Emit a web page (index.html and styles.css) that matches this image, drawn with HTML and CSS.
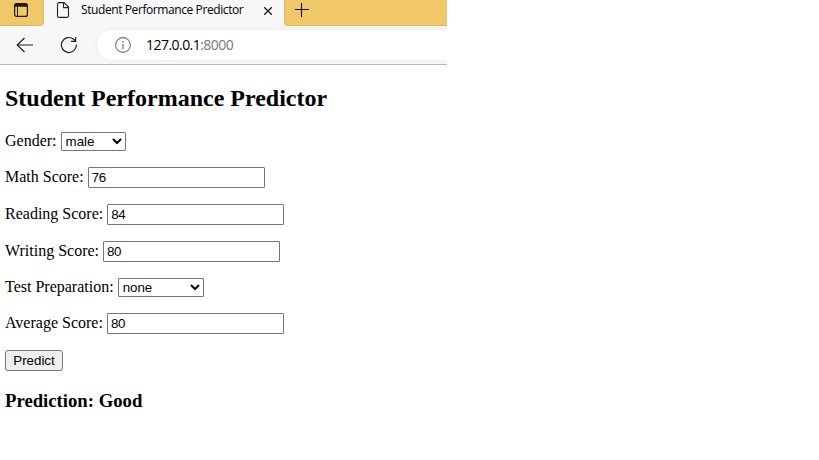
FILE: index.html
```html
<!DOCTYPE html>
<html lang="en">
<head>
<meta charset="utf-8">
<title>Student Performance Predictor</title>
<link rel="stylesheet" href="styles.css">
</head>
<body>
<header class="browser">
  <div class="tabs">
    <div class="tab-actions">
      <svg width="16" height="16" viewBox="0 0 16 16" fill="none" stroke="#201b10"><rect x="1.6" y="1.6" width="12.8" height="12.8" rx="2" stroke-width="1.2"/><path d="M2 3.3h12" stroke-width="3"/><path d="M4.5 5v9" stroke-width="1"/></svg>
    </div>
    <div class="tab">
      <svg class="page-icon" width="14" height="18" viewBox="0 0 14 18" fill="none" stroke="#222" stroke-width="1.1"><path d="M3 1.6h5l4.5 4.5v8.8a1.5 1.5 0 0 1-1.5 1.5H3a1.5 1.5 0 0 1-1.5-1.5V3.1A1.5 1.5 0 0 1 3 1.6zM7.5 1.6v5h5"/></svg>
      <span class="tab-title">Student Performance Predictor</span>
      <svg class="close" width="10" height="10" viewBox="0 0 10 10" stroke="#222" stroke-width="1.4"><path d="M1.2 1.2l7.6 7.6M8.8 1.2L1.2 8.8"/></svg>
    </div>
    <div class="new-tab">
      <svg width="16" height="16" viewBox="0 0 16 16" stroke="#111" stroke-width="1.1"><path d="M1 7.5h14M7.5 1v14"/></svg>
    </div>
  </div>
  <div class="toolbar">
    <svg class="back" width="18" height="16" viewBox="0 0 18 16" fill="none" stroke="#222" stroke-width="1.2"><path d="M17 8H1.2M8.5 1L1.2 8l7.3 7"/></svg>
    <svg class="reload" width="18" height="18" viewBox="0 0 18 18" fill="none" stroke="#222" stroke-width="1.2"><path d="M16.4 8.5A7.5 7.5 0 1 1 14 3.5L15.6 5.2M15.6 1v4.4h-4.6"/></svg>
    <div class="address">
      <svg width="18" height="18" viewBox="0 0 18 18" fill="none" stroke="#777" stroke-width="1.1"><circle cx="9" cy="9" r="7.4"/><path d="M9 8v5M9 5v1.5" stroke-width="1.3"/></svg>
      <span class="url">127.0.0.1<span class="port">:8000</span></span>
    </div>
  </div>
</header>
<main>
  <h2>Student Performance Predictor</h2>
  <form>
    <div class="row"><label for="gender">Gender:</label><select id="gender" class="gender"><option>male</option></select></div>
    <div class="row"><label for="math">Math Score:</label><input id="math" value="76"></div>
    <div class="row"><label for="reading">Reading Score:</label><input id="reading" value="84"></div>
    <div class="row"><label for="writing">Writing Score:</label><input id="writing" value="80"></div>
    <div class="row"><label for="prep">Test Preparation:</label><select id="prep" class="prep"><option>none</option></select></div>
    <div class="row"><label for="average">Average Score:</label><input id="average" value="80"></div>
    <button type="button">Predict</button>
  </form>
  <h3>Prediction: Good</h3>
</main>
</body>
</html>
```
FILE: styles.css
```css
* { box-sizing: border-box; }
body { margin: 0; background: #fff; color: #000; font: 16px "Liberation Serif", serif; overflow: hidden; }
svg { display: block; flex: none; }
.browser { width: 447px; height: 65px; background: #f7f7f7; border-bottom: 1px solid #b9b9b9; font-family: "Open Sans", sans-serif; }
.tabs { display: flex; height: 26px; }
.tab-actions, .new-tab { background: #f0c869; border-bottom: 1px solid #dfb75b; }
.tab-actions { width: 44px; padding: 2px 0 0 13px; border-right: 1px solid #e3bd65; border-radius: 0 0 4px 0; }
.tab { display: flex; width: 240px; padding-left: 12px; }
.page-icon { margin-top: 1px; }
.tab-title { width: 163px; margin-left: 11px; font-size: 12px; line-height: 20px; letter-spacing: -0.41px; white-space: nowrap; }
.close { margin: 6px 0 0 19px; }
.new-tab { flex: 1; padding: 2px 0 0 9px; border-left: 1px solid #e3bd65; border-radius: 0 0 0 4px; }
.toolbar { display: flex; height: 38px; padding: 4px 0 4px 16px; }
.back { margin-top: 7px; }
.reload { margin: 6px 0 0 26px; }
.address { display: flex; flex: 1; height: 30px; margin-left: 19px; padding: 6px 0 0 17px; background: #fff; border-radius: 15px 0 0 15px; box-shadow: 0 0 4px #e6e6e6; clip-path: inset(-4px 0 -4px -4px); }
.url { margin-left: 14px; font-size: 14px; line-height: 18px; letter-spacing: -0.54px; }
.port { color: #777; }
main { padding: 20px 5px 0; }
h2 { margin: 0; font-size: 24px; line-height: 27px; }
form { display: flex; flex-direction: column; align-items: flex-start; gap: 16px; margin-top: 20px; }
.row { display: flex; align-items: center; }
label { margin: 0 4px 2px 0; line-height: 16px; white-space: nowrap; }
input, select, button { margin: 0; font: 13.333px "Liberation Sans", sans-serif; color: #000; border: 1px solid #767676; }
input { width: 177px; height: 21px; padding: 1px 3px; border-radius: 1px; background: #fff; letter-spacing: -0.4px; }
select { height: 19px; background: #fff; border-radius: 1px; }
.gender { width: 65px; }
.prep { width: 86px; }
button { width: 58px; height: 21px; padding: 0; background: #efefef; border-radius: 3px; }
h3 { margin: 19px 0 0; font-size: 18.72px; line-height: 21px; }
```
